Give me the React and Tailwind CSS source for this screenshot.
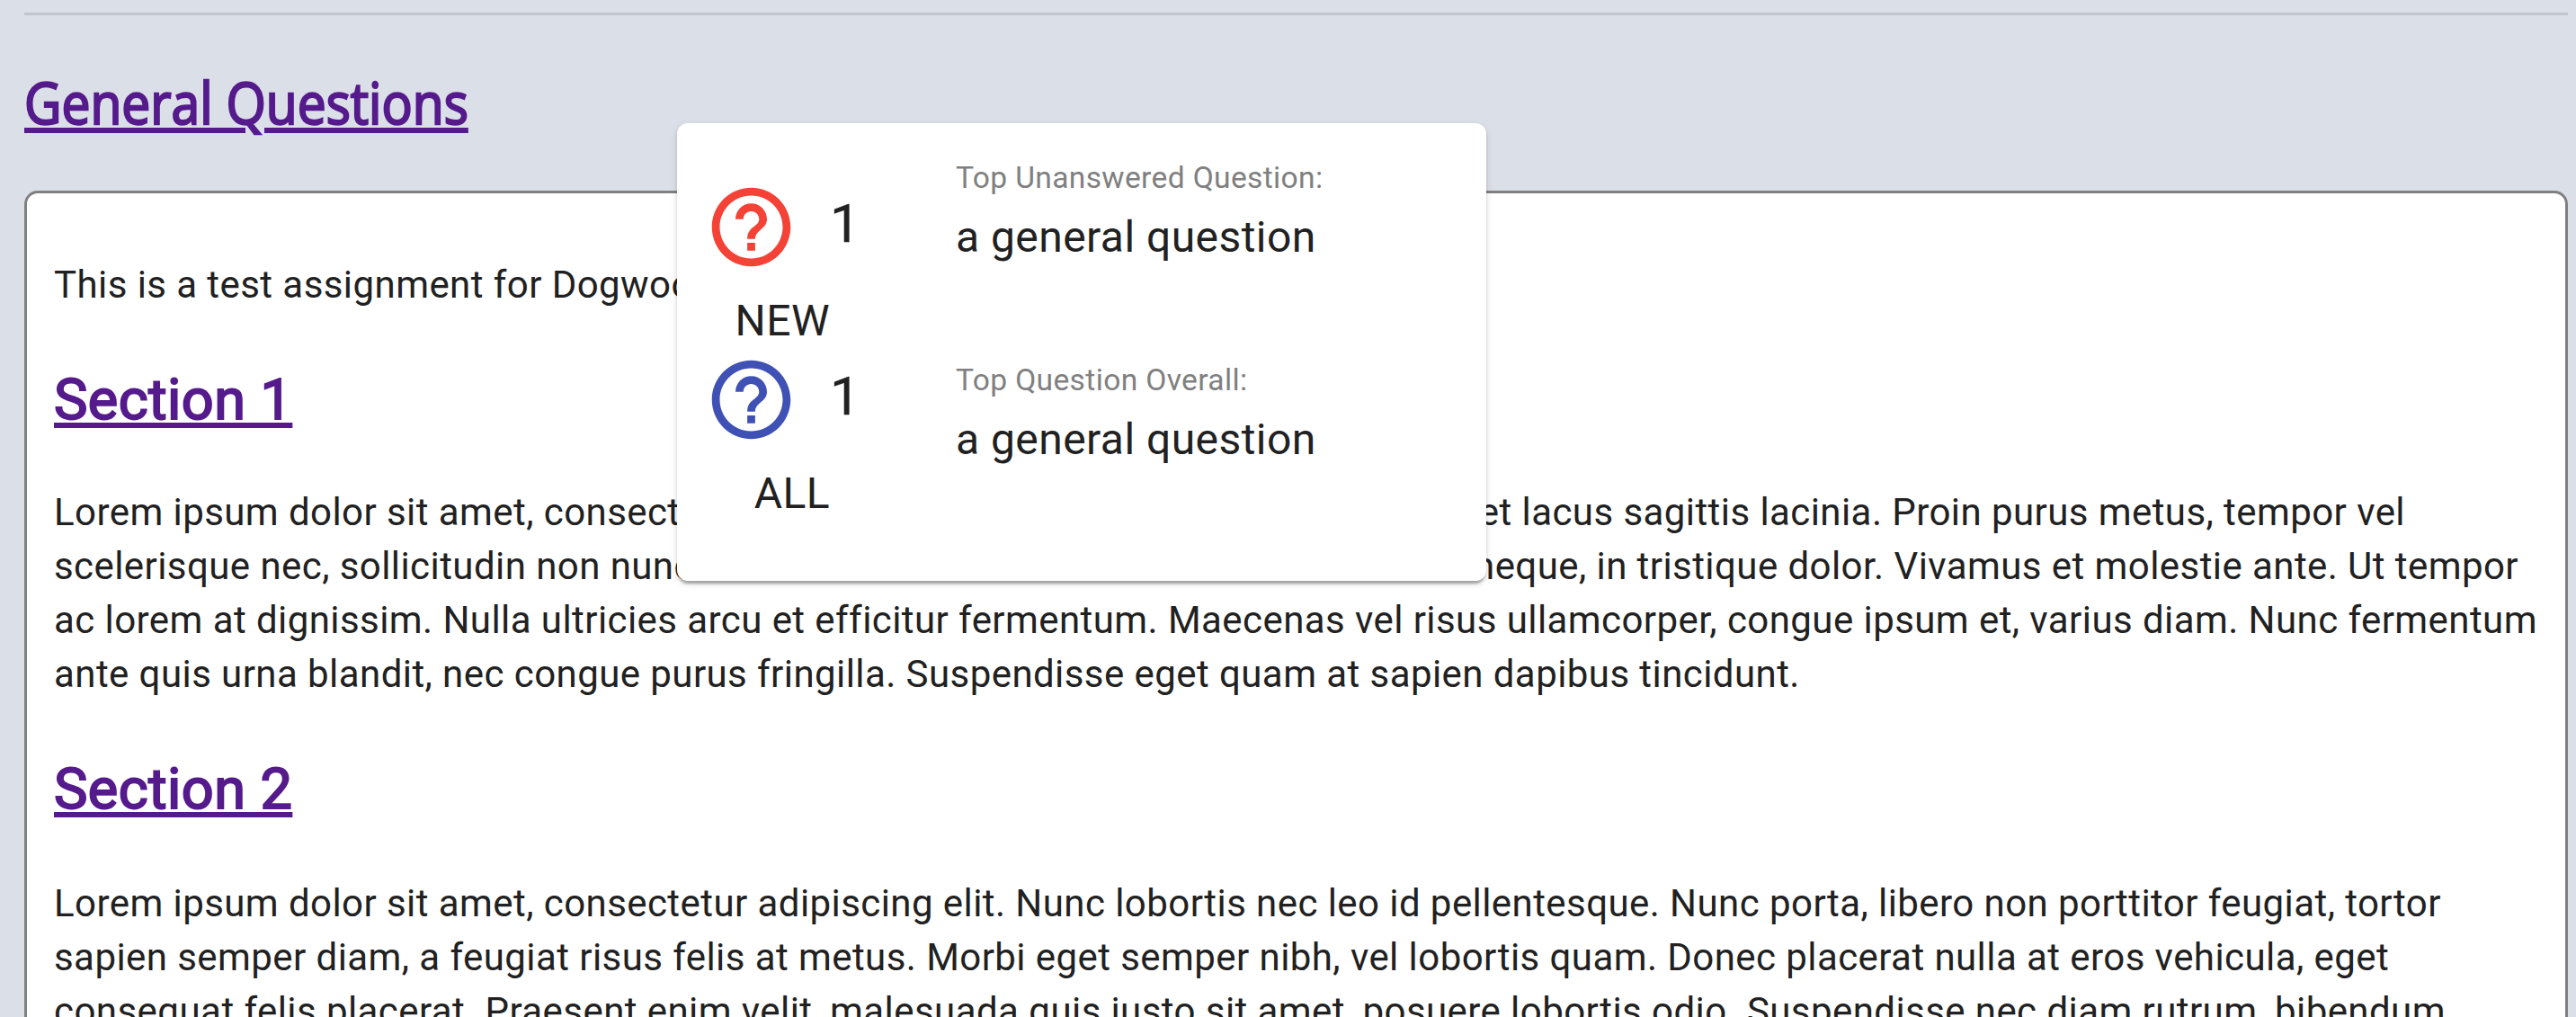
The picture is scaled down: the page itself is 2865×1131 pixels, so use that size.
function HelpIcon({ className }) {
  return (
    <svg viewBox="0 0 24 24" className={className} fill="currentColor" aria-hidden="true">
      <path d="M11 18h2v-2h-2v2zm1-16C6.48 2 2 6.48 2 12s4.48 10 10 10 10-4.48 10-10S17.52 2 12 2zm0 18c-4.41 0-8-3.59-8-8s3.59-8 8-8 8 3.59 8 8-3.59 8-8 8zm0-14c-2.21 0-4 1.79-4 4h2c0-1.1.9-2 2-2s2 .9 2 2c0 2-3 1.75-3 5h2c0-2.25 3-2.5 3-5 0-2.21-1.79-4-4-4z" />
    </svg>
  );
}

function Count({ color, label }) {
  return (
    <div className="h-48">
      <div className="flex h-[105px] items-center">
        <HelpIcon className={`size-[105px] shrink-0 ${color}`} />
        <span className="-mt-2 ml-[35px] text-[60px] leading-[96px] tracking-[0.45px] [-webkit-text-stroke:0.3px]">1</span>
      </div>
      <div className="mt-[16px] w-[140px] text-right text-[48px] leading-[72px] tracking-[0.45px]">{label}</div>
    </div>
  );
}

function TopQuestion({ label, question }) {
  return (
    <div className="h-[225px]">
      <div className="text-[33.6px] leading-[60px] tracking-[0.35px] text-[#808080]">{label}</div>
      <div className="text-[48px] leading-[72px] tracking-[0.45px]">{question}</div>
    </div>
  );
}

function SectionLink({ children, className }) {
  return (
    <h2 className={`h-20 text-[63px] leading-[80px] font-normal text-[#551a8b] [-webkit-text-stroke:2px] ${className}`}>
      <a className="underline decoration-[6px] underline-offset-[4px]">{children}</a>
    </h2>
  );
}

export default function App() {
  return (
    <div className="relative h-[1131px] overflow-hidden bg-[#dbdfe7] pt-[14px] pr-[9px] pl-[27px] font-['Roboto',sans-serif] text-[#212121]">
      <hr className="h-[3px] border-0 bg-[#bfc4cd]" />
      <h1 className="mt-[57px] h-[82px] w-fit origin-left scale-x-[0.89] font-['Open_Sans',sans-serif] text-[64px] leading-[80px] font-normal text-[#551a8b] [-webkit-text-stroke:2.4px]">
        <a className="underline decoration-[6px] underline-offset-[4px]">General Questions</a>
      </h1>
      <main className="mt-14 h-[1100px] rounded-[15px] border-3 border-[#808080] bg-white px-[30px] pt-[72px] text-[42px] leading-[60px] tracking-[0.43px] whitespace-nowrap">
        <p>This is a test assignment for Dogwood</p>
        <SectionLink className="mt-[58px]">Section 1</SectionLink>
        <div className="mt-[55px]">
          <p className="flex w-[2615px] justify-between">
            <span>Lorem ipsum dolor sit amet, consectetur</span>
            <span>et lacus sagittis lacinia. Proin purus metus, tempor vel</span>
          </p>
          <p className="flex w-[2741px] justify-between">
            <span>scelerisque nec, sollicitudin non nunc.</span>
            <span>neque, in tristique dolor. Vivamus et molestie ante. Ut tempor</span>
          </p>
          <p>ac lorem at dignissim. Nulla ultricies arcu et efficitur fermentum. Maecenas vel risus ullamcorper, congue ipsum et, varius diam. Nunc fermentum</p>
          <p>ante quis urna blandit, nec congue purus fringilla. Suspendisse eget quam at sapien dapibus tincidunt.</p>
        </div>
        <SectionLink className="mt-[58px]">Section 2</SectionLink>
        <div className="mt-[57px]">
          <p>Lorem ipsum dolor sit amet, consectetur adipiscing elit. Nunc lobortis nec leo id pellentesque. Nunc porta, libero non porttitor feugiat, tortor</p>
          <p>sapien semper diam, a feugiat risus felis at metus. Morbi eget semper nibh, vel lobortis quam. Donec placerat nulla at eros vehicula, eget</p>
          <p>consequat felis placerat. Praesent enim velit, malesuada quis justo sit amet, posuere lobortis odio. Suspendisse nec diam rutrum, bibendum</p>
        </div>
      </main>
      <aside className="absolute top-[137px] left-[753px] flex h-[509px] w-[900px] rounded-xl bg-white pl-[30px] shadow-[0_6px_3px_-3px_rgba(0,0,0,0.2),0_3px_3px_0_rgba(0,0,0,0.14),0_3px_9px_0_rgba(0,0,0,0.12)]">
        <div className="w-[280px] pt-[63px]">
          <Count color="text-[#f44336]" label="NEW" />
          <Count color="text-[#3f51b5]" label="ALL" />
        </div>
        <div className="pt-[31px]">
          <TopQuestion label="Top Unanswered Question:" question="a general question" />
          <TopQuestion label="Top Question Overall:" question="a general question" />
        </div>
      </aside>
    </div>
  );
}
